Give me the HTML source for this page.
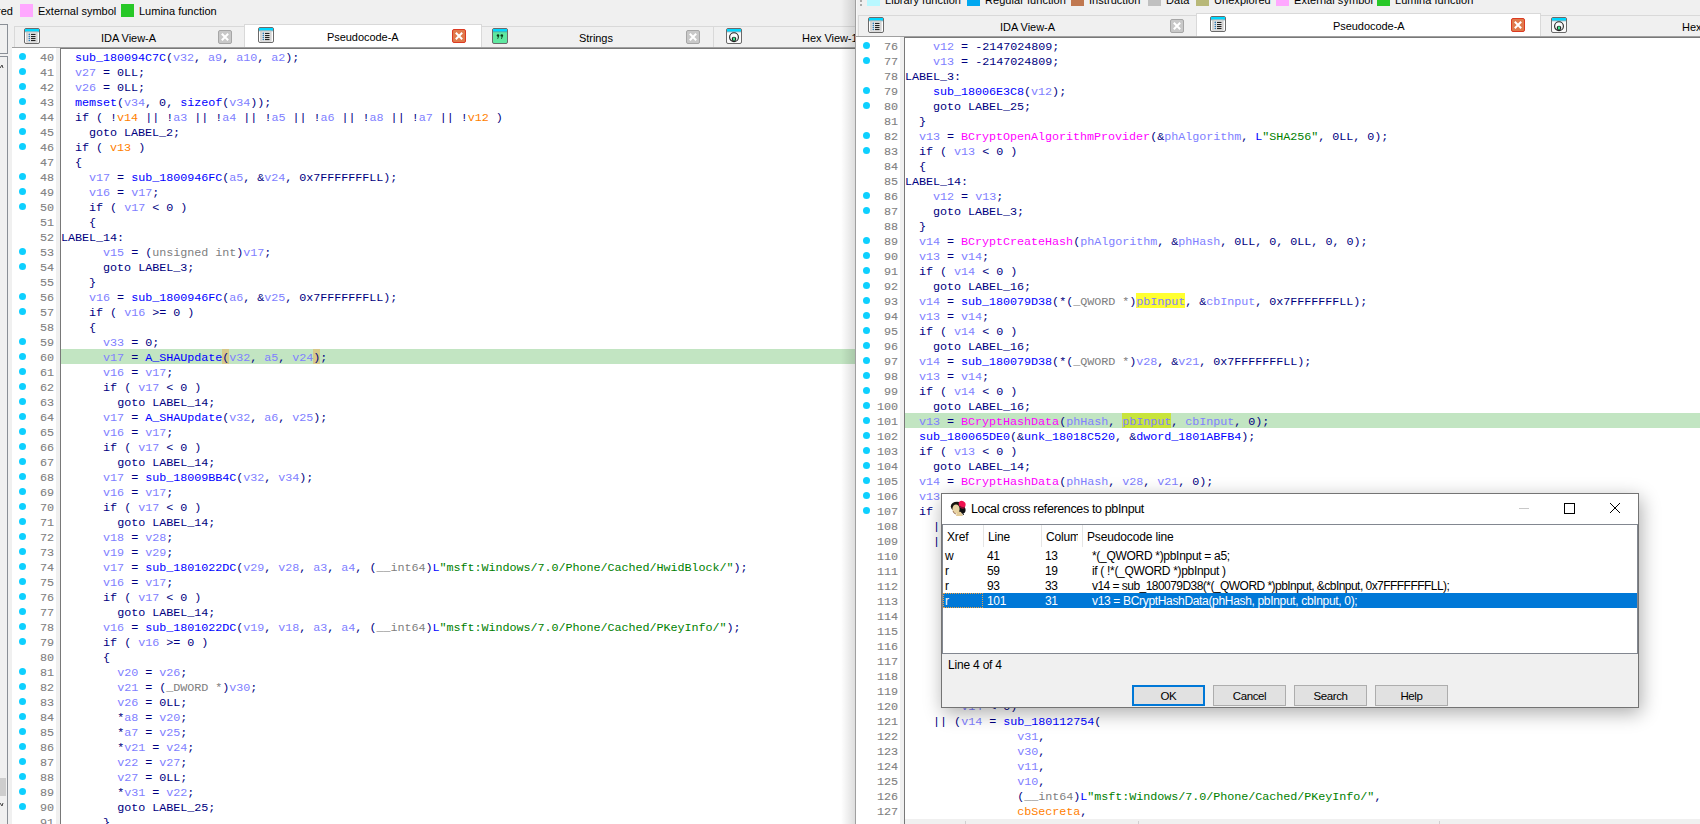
<!DOCTYPE html><html><head><meta charset="utf-8"><style>
*{margin:0;padding:0;box-sizing:border-box}
html,body{width:1700px;height:824px;overflow:hidden}
body{background:#f0f0f0;position:relative;font-family:"Liberation Sans",sans-serif;color:#000}
div{position:absolute}
i{font-style:normal}
.code{font-family:"Liberation Mono",monospace;font-size:11.75px;letter-spacing:-0.05px}
.ln{left:0;right:0;height:15px;line-height:15px;white-space:pre}
.ln i{position:relative;top:2px}
.mk{top:0;height:15px}
.k{color:#000080}.f{color:#0000ff}.v{color:#8080ff}.o{color:#ff8000}.m{color:#ff00ff}.s{color:#008000}.t{color:#808080}
.hl{background:#c2e5c2}
.dot{width:7px;height:7px;border-radius:50%;background:#0ed0ff}
.num{width:30px;text-align:right;height:15px;line-height:15px;color:#808080;-webkit-text-stroke:0.1px}
.num span{position:relative;top:2px}
.ui{font-size:11px;letter-spacing:-0.05px;white-space:pre;line-height:14px}
.dl{font-size:12px;letter-spacing:-0.35px;white-space:pre;line-height:14px}
.sw{width:13px;height:13px}
.cls{width:14px;height:14px;border-radius:2px}
.cls.g{background:#c4c4c4;border:1px solid #a8a8a8}
.cls.r{background:#e07050;border:1px solid #d04030}
.cls::before,.cls::after{content:"";position:absolute;left:2.5px;top:5.5px;width:7px;height:2px;background:#fff}
.cls::before{transform:rotate(45deg)}.cls::after{transform:rotate(-45deg)}
.tab{top:0;height:22px;border-top:1px solid #d9d9d9;border-left:1px solid #d9d9d9}
.btn{top:685px;height:21px;width:73px;background:#e1e1e1;border:1px solid #adadad;text-align:center;font-size:11.5px;letter-spacing:-0.4px;line-height:21px}
</style></head><body>
<div class="ui" style="right:1687px;top:4px;text-align:right;letter-spacing:0">Unexplored</div>
<div class="sw" style="left:20px;top:4px;background:#ffa8ff"></div>
<div class="ui" style="left:38px;top:4px;letter-spacing:0">External symbol</div>
<div class="sw" style="left:121px;top:4px;background:#28c828"></div>
<div class="ui" style="left:139px;top:4px;letter-spacing:0">Lumina function</div>
<div style="left:-2px;top:24px;width:10px;height:30px;border:1px solid #8a8f96"></div>
<div style="left:-2px;top:56px;width:10px;height:800px;border:1px solid #8a8f96"></div>
<div style="left:0;top:778px;width:6px;height:18px;background:#cdcdcd"></div>
<svg width="4" height="5" style="position:absolute;left:0;top:64px" viewBox="0 0 4 5"><path d="M0 4 L2 1 L3 4" stroke="#444" stroke-width="1" fill="none"/></svg>
<svg width="4" height="5" style="position:absolute;left:0;top:802px" viewBox="0 0 4 5"><path d="M0 1 L2 4 L3 1" stroke="#444" stroke-width="1" fill="none"/></svg>
<div style="left:14px;top:26px;width:841px;height:22px;border-top:1px solid #d9d9d9;border-left:1px solid #d9d9d9"></div>
<div style="left:713px;top:27px;width:1px;height:20px;background:#d9d9d9"></div>
<div style="left:244px;top:24px;width:238px;height:24px;background:#fff;border-top:1px solid #d9d9d9;border-left:1px solid #d9d9d9;border-right:1px solid #d9d9d9"></div>
<svg width="16" height="16" viewBox="0 0 16 16" style="position:absolute;left:24px;top:28px"><rect x="0.5" y="0.5" width="15" height="15" rx="1.5" fill="#fff" stroke="#6a6a6a"/><rect x="1" y="1" width="14" height="2.6" fill="#00d8ff"/><rect x="1" y="3.6" width="14" height="0.6" fill="#4a8aa0"/><rect x="2.3" y="3.7" width="11.2" height="10.9" fill="#c4c4c4"/><rect x="3.5" y="4.5" width="9" height="9.5" fill="#e4e4e4"/><g fill="#2a7ab8"><circle cx="5.3" cy="6.4" r="0.8"/><circle cx="5.3" cy="8.5" r="0.8"/><circle cx="5.3" cy="10.5" r="0.8"/><circle cx="5.3" cy="12.5" r="0.8"/></g><g fill="#222"><rect x="7" y="5.9" width="4.5" height="1.1"/><rect x="7" y="8" width="4.5" height="1.1"/><rect x="7" y="10" width="4.5" height="1.1"/><rect x="7" y="12" width="4.5" height="1.1"/></g></svg>
<div class="ui" style="left:101px;top:31px">IDA View-A</div>
<svg width="14" height="14" viewBox="0 0 14 14" style="position:absolute;left:218px;top:30px"><rect x="0.5" y="0.5" width="13" height="13" rx="1.5" fill="#c8c8c8" stroke="#a6a6a6"/><path d="M3.8 3.8L10.2 10.2M10.2 3.8L3.8 10.2" stroke="#fff" stroke-width="2"/></svg>
<svg width="16" height="16" viewBox="0 0 16 16" style="position:absolute;left:258px;top:27px"><rect x="0.5" y="0.5" width="15" height="15" rx="1.5" fill="#fff" stroke="#6a6a6a"/><rect x="1" y="1" width="14" height="2.6" fill="#00d8ff"/><rect x="1" y="3.6" width="14" height="0.6" fill="#4a8aa0"/><rect x="2.3" y="3.7" width="11.2" height="10.9" fill="#c4c4c4"/><rect x="3.5" y="4.5" width="9" height="9.5" fill="#e4e4e4"/><g fill="#2a7ab8"><circle cx="5.3" cy="6.4" r="0.8"/><circle cx="5.3" cy="8.5" r="0.8"/><circle cx="5.3" cy="10.5" r="0.8"/><circle cx="5.3" cy="12.5" r="0.8"/></g><g fill="#222"><rect x="7" y="5.9" width="4.5" height="1.1"/><rect x="7" y="8" width="4.5" height="1.1"/><rect x="7" y="10" width="4.5" height="1.1"/><rect x="7" y="12" width="4.5" height="1.1"/></g></svg>
<div class="ui" style="left:327px;top:30px">Pseudocode-A</div>
<svg width="14" height="14" viewBox="0 0 14 14" style="position:absolute;left:452px;top:29px"><rect x="0.5" y="0.5" width="13" height="13" rx="1.5" fill="#e07a4c" stroke="#dc3a22"/><path d="M3.8 3.8L10.2 10.2M10.2 3.8L3.8 10.2" stroke="#fff" stroke-width="2"/></svg>
<svg width="16" height="16" viewBox="0 0 16 16" style="position:absolute;left:492px;top:28px"><rect x="0.5" y="0.5" width="15" height="15" rx="1.5" fill="#5ee8a0" stroke="#6a6a6a"/><rect x="1" y="1" width="14" height="2.6" fill="#00d8ff"/><rect x="1" y="3.6" width="14" height="0.6" fill="#4a8aa0"/><g fill="#0a3a1a"><circle cx="6" cy="7.5" r="1.3"/><circle cx="9.8" cy="7.5" r="1.3"/><path d="M6.2 8 L7 8.2 L6 11 L5.3 10.8Z"/><path d="M10 8 L10.8 8.2 L9.8 11 L9.1 10.8Z"/></g></svg>
<div class="ui" style="left:579px;top:31px">Strings</div>
<svg width="14" height="14" viewBox="0 0 14 14" style="position:absolute;left:686px;top:30px"><rect x="0.5" y="0.5" width="13" height="13" rx="1.5" fill="#c8c8c8" stroke="#a6a6a6"/><path d="M3.8 3.8L10.2 10.2M10.2 3.8L3.8 10.2" stroke="#fff" stroke-width="2"/></svg>
<svg width="16" height="16" viewBox="0 0 16 16" style="position:absolute;left:726px;top:28px"><rect x="0.5" y="0.5" width="15" height="15" rx="1.5" fill="#fafafa" stroke="#6a6a6a"/><rect x="1" y="1" width="14" height="2.6" fill="#00d8ff"/><rect x="1" y="3.6" width="14" height="0.6" fill="#4a8aa0"/><circle cx="8" cy="9.2" r="4.4" fill="none" stroke="#222" stroke-width="1.1"/><circle cx="8" cy="11" r="2.3" fill="#222"/><ellipse cx="8" cy="11" rx="1.2" ry="1.7" fill="#40e890"/></svg>
<div class="ui" style="left:802px;top:31px">Hex View-1</div>
<div style="left:12px;top:47px;width:843px;height:777px;background:#fff;border-top:1px solid #a0a0a0"></div>
<div style="left:56px;top:48px;width:4px;height:776px;background:#f0f0f0"></div>
<div style="left:60px;top:48px;width:795px;height:776px;border-top:1px solid #787878;border-left:1px solid #787878"></div>
<div class="dot" style="left:19px;top:53px"></div><div class="num code" style="left:24px;top:49px"><span>40</span></div><div class="dot" style="left:19px;top:68px"></div><div class="num code" style="left:24px;top:64px"><span>41</span></div><div class="dot" style="left:19px;top:83px"></div><div class="num code" style="left:24px;top:79px"><span>42</span></div><div class="dot" style="left:19px;top:98px"></div><div class="num code" style="left:24px;top:94px"><span>43</span></div><div class="dot" style="left:19px;top:113px"></div><div class="num code" style="left:24px;top:109px"><span>44</span></div><div class="dot" style="left:19px;top:128px"></div><div class="num code" style="left:24px;top:124px"><span>45</span></div><div class="dot" style="left:19px;top:143px"></div><div class="num code" style="left:24px;top:139px"><span>46</span></div><div class="num code" style="left:24px;top:154px"><span>47</span></div><div class="dot" style="left:19px;top:173px"></div><div class="num code" style="left:24px;top:169px"><span>48</span></div><div class="dot" style="left:19px;top:188px"></div><div class="num code" style="left:24px;top:184px"><span>49</span></div><div class="dot" style="left:19px;top:203px"></div><div class="num code" style="left:24px;top:199px"><span>50</span></div><div class="num code" style="left:24px;top:214px"><span>51</span></div><div class="num code" style="left:24px;top:229px"><span>52</span></div><div class="dot" style="left:19px;top:248px"></div><div class="num code" style="left:24px;top:244px"><span>53</span></div><div class="dot" style="left:19px;top:263px"></div><div class="num code" style="left:24px;top:259px"><span>54</span></div><div class="num code" style="left:24px;top:274px"><span>55</span></div><div class="dot" style="left:19px;top:293px"></div><div class="num code" style="left:24px;top:289px"><span>56</span></div><div class="dot" style="left:19px;top:308px"></div><div class="num code" style="left:24px;top:304px"><span>57</span></div><div class="num code" style="left:24px;top:319px"><span>58</span></div><div class="dot" style="left:19px;top:338px"></div><div class="num code" style="left:24px;top:334px"><span>59</span></div><div class="dot" style="left:19px;top:353px"></div><div class="num code" style="left:24px;top:349px"><span>60</span></div><div class="dot" style="left:19px;top:368px"></div><div class="num code" style="left:24px;top:364px"><span>61</span></div><div class="dot" style="left:19px;top:383px"></div><div class="num code" style="left:24px;top:379px"><span>62</span></div><div class="dot" style="left:19px;top:398px"></div><div class="num code" style="left:24px;top:394px"><span>63</span></div><div class="dot" style="left:19px;top:413px"></div><div class="num code" style="left:24px;top:409px"><span>64</span></div><div class="dot" style="left:19px;top:428px"></div><div class="num code" style="left:24px;top:424px"><span>65</span></div><div class="dot" style="left:19px;top:443px"></div><div class="num code" style="left:24px;top:439px"><span>66</span></div><div class="dot" style="left:19px;top:458px"></div><div class="num code" style="left:24px;top:454px"><span>67</span></div><div class="dot" style="left:19px;top:473px"></div><div class="num code" style="left:24px;top:469px"><span>68</span></div><div class="dot" style="left:19px;top:488px"></div><div class="num code" style="left:24px;top:484px"><span>69</span></div><div class="dot" style="left:19px;top:503px"></div><div class="num code" style="left:24px;top:499px"><span>70</span></div><div class="dot" style="left:19px;top:518px"></div><div class="num code" style="left:24px;top:514px"><span>71</span></div><div class="dot" style="left:19px;top:533px"></div><div class="num code" style="left:24px;top:529px"><span>72</span></div><div class="dot" style="left:19px;top:548px"></div><div class="num code" style="left:24px;top:544px"><span>73</span></div><div class="dot" style="left:19px;top:563px"></div><div class="num code" style="left:24px;top:559px"><span>74</span></div><div class="dot" style="left:19px;top:578px"></div><div class="num code" style="left:24px;top:574px"><span>75</span></div><div class="dot" style="left:19px;top:593px"></div><div class="num code" style="left:24px;top:589px"><span>76</span></div><div class="dot" style="left:19px;top:608px"></div><div class="num code" style="left:24px;top:604px"><span>77</span></div><div class="dot" style="left:19px;top:623px"></div><div class="num code" style="left:24px;top:619px"><span>78</span></div><div class="dot" style="left:19px;top:638px"></div><div class="num code" style="left:24px;top:634px"><span>79</span></div><div class="num code" style="left:24px;top:649px"><span>80</span></div><div class="dot" style="left:19px;top:668px"></div><div class="num code" style="left:24px;top:664px"><span>81</span></div><div class="dot" style="left:19px;top:683px"></div><div class="num code" style="left:24px;top:679px"><span>82</span></div><div class="dot" style="left:19px;top:698px"></div><div class="num code" style="left:24px;top:694px"><span>83</span></div><div class="dot" style="left:19px;top:713px"></div><div class="num code" style="left:24px;top:709px"><span>84</span></div><div class="dot" style="left:19px;top:728px"></div><div class="num code" style="left:24px;top:724px"><span>85</span></div><div class="dot" style="left:19px;top:743px"></div><div class="num code" style="left:24px;top:739px"><span>86</span></div><div class="dot" style="left:19px;top:758px"></div><div class="num code" style="left:24px;top:754px"><span>87</span></div><div class="dot" style="left:19px;top:773px"></div><div class="num code" style="left:24px;top:769px"><span>88</span></div><div class="dot" style="left:19px;top:788px"></div><div class="num code" style="left:24px;top:784px"><span>89</span></div><div class="dot" style="left:19px;top:803px"></div><div class="num code" style="left:24px;top:799px"><span>90</span></div><div class="num code" style="left:24px;top:814px"><span>91</span></div>
<div class="code" style="left:61px;top:49px;width:794px;height:775px;overflow:hidden"><div class="ln" style="top:0px"><i class="k"> </i><i class="k"> </i><i class="f">sub_180094C7C</i><i class="k">(</i><i class="v">v32</i><i class="k">,</i><i class="k"> </i><i class="v">a9</i><i class="k">,</i><i class="k"> </i><i class="v">a10</i><i class="k">,</i><i class="k"> </i><i class="v">a2</i><i class="k">)</i><i class="k">;</i></div><div class="ln" style="top:15px"><i class="k"> </i><i class="k"> </i><i class="v">v27</i><i class="k"> </i><i class="k">=</i><i class="k"> </i><i class="k">0LL</i><i class="k">;</i></div><div class="ln" style="top:30px"><i class="k"> </i><i class="k"> </i><i class="v">v26</i><i class="k"> </i><i class="k">=</i><i class="k"> </i><i class="k">0LL</i><i class="k">;</i></div><div class="ln" style="top:45px"><i class="k"> </i><i class="k"> </i><i class="f">memset</i><i class="k">(</i><i class="v">v34</i><i class="k">,</i><i class="k"> </i><i class="k">0</i><i class="k">,</i><i class="k"> </i><i class="f">sizeof</i><i class="k">(</i><i class="v">v34</i><i class="k">)</i><i class="k">)</i><i class="k">;</i></div><div class="ln" style="top:60px"><i class="k"> </i><i class="k"> </i><i class="k">if</i><i class="k"> </i><i class="k">(</i><i class="k"> </i><i class="k">!</i><i class="o">v14</i><i class="k"> </i><i class="k">|</i><i class="k">|</i><i class="k"> </i><i class="k">!</i><i class="v">a3</i><i class="k"> </i><i class="k">|</i><i class="k">|</i><i class="k"> </i><i class="k">!</i><i class="v">a4</i><i class="k"> </i><i class="k">|</i><i class="k">|</i><i class="k"> </i><i class="k">!</i><i class="v">a5</i><i class="k"> </i><i class="k">|</i><i class="k">|</i><i class="k"> </i><i class="k">!</i><i class="v">a6</i><i class="k"> </i><i class="k">|</i><i class="k">|</i><i class="k"> </i><i class="k">!</i><i class="v">a8</i><i class="k"> </i><i class="k">|</i><i class="k">|</i><i class="k"> </i><i class="k">!</i><i class="v">a7</i><i class="k"> </i><i class="k">|</i><i class="k">|</i><i class="k"> </i><i class="k">!</i><i class="o">v12</i><i class="k"> </i><i class="k">)</i></div><div class="ln" style="top:75px"><i class="k"> </i><i class="k"> </i><i class="k"> </i><i class="k"> </i><i class="k">goto</i><i class="k"> </i><i class="k">LABEL_2</i><i class="k">;</i></div><div class="ln" style="top:90px"><i class="k"> </i><i class="k"> </i><i class="k">if</i><i class="k"> </i><i class="k">(</i><i class="k"> </i><i class="o">v13</i><i class="k"> </i><i class="k">)</i></div><div class="ln" style="top:105px"><i class="k"> </i><i class="k"> </i><i class="k">{</i></div><div class="ln" style="top:120px"><i class="k"> </i><i class="k"> </i><i class="k"> </i><i class="k"> </i><i class="v">v17</i><i class="k"> </i><i class="k">=</i><i class="k"> </i><i class="f">sub_1800946FC</i><i class="k">(</i><i class="v">a5</i><i class="k">,</i><i class="k"> </i><i class="k">&amp;</i><i class="v">v24</i><i class="k">,</i><i class="k"> </i><i class="k">0x7FFFFFFFLL</i><i class="k">)</i><i class="k">;</i></div><div class="ln" style="top:135px"><i class="k"> </i><i class="k"> </i><i class="k"> </i><i class="k"> </i><i class="v">v16</i><i class="k"> </i><i class="k">=</i><i class="k"> </i><i class="v">v17</i><i class="k">;</i></div><div class="ln" style="top:150px"><i class="k"> </i><i class="k"> </i><i class="k"> </i><i class="k"> </i><i class="k">if</i><i class="k"> </i><i class="k">(</i><i class="k"> </i><i class="v">v17</i><i class="k"> </i><i class="k">&lt;</i><i class="k"> </i><i class="k">0</i><i class="k"> </i><i class="k">)</i></div><div class="ln" style="top:165px"><i class="k"> </i><i class="k"> </i><i class="k"> </i><i class="k"> </i><i class="k">{</i></div><div class="ln" style="top:180px"><i class="k">LABEL_14</i><i class="k">:</i></div><div class="ln" style="top:195px"><i class="k"> </i><i class="k"> </i><i class="k"> </i><i class="k"> </i><i class="k"> </i><i class="k"> </i><i class="v">v15</i><i class="k"> </i><i class="k">=</i><i class="k"> </i><i class="k">(</i><i class="t">unsigned int</i><i class="k">)</i><i class="v">v17</i><i class="k">;</i></div><div class="ln" style="top:210px"><i class="k"> </i><i class="k"> </i><i class="k"> </i><i class="k"> </i><i class="k"> </i><i class="k"> </i><i class="k">goto</i><i class="k"> </i><i class="k">LABEL_3</i><i class="k">;</i></div><div class="ln" style="top:225px"><i class="k"> </i><i class="k"> </i><i class="k"> </i><i class="k"> </i><i class="k">}</i></div><div class="ln" style="top:240px"><i class="k"> </i><i class="k"> </i><i class="k"> </i><i class="k"> </i><i class="v">v16</i><i class="k"> </i><i class="k">=</i><i class="k"> </i><i class="f">sub_1800946FC</i><i class="k">(</i><i class="v">a6</i><i class="k">,</i><i class="k"> </i><i class="k">&amp;</i><i class="v">v25</i><i class="k">,</i><i class="k"> </i><i class="k">0x7FFFFFFFLL</i><i class="k">)</i><i class="k">;</i></div><div class="ln" style="top:255px"><i class="k"> </i><i class="k"> </i><i class="k"> </i><i class="k"> </i><i class="k">if</i><i class="k"> </i><i class="k">(</i><i class="k"> </i><i class="v">v16</i><i class="k"> </i><i class="k">&gt;</i><i class="k">=</i><i class="k"> </i><i class="k">0</i><i class="k"> </i><i class="k">)</i></div><div class="ln" style="top:270px"><i class="k"> </i><i class="k"> </i><i class="k"> </i><i class="k"> </i><i class="k">{</i></div><div class="ln" style="top:285px"><i class="k"> </i><i class="k"> </i><i class="k"> </i><i class="k"> </i><i class="k"> </i><i class="k"> </i><i class="v">v33</i><i class="k"> </i><i class="k">=</i><i class="k"> </i><i class="k">0</i><i class="k">;</i></div><div class="ln hl" style="top:300px"><div class="mk" style="left:161px;width:7px;background:#d6c98a"></div><div class="mk" style="left:252px;width:7px;background:#d6c98a"></div><i class="k"> </i><i class="k"> </i><i class="k"> </i><i class="k"> </i><i class="k"> </i><i class="k"> </i><i class="v">v17</i><i class="k"> </i><i class="k">=</i><i class="k"> </i><i class="f">A_SHAUpdate</i><i class="k">(</i><i class="v">v32</i><i class="k">,</i><i class="k"> </i><i class="v">a5</i><i class="k">,</i><i class="k"> </i><i class="v">v24</i><i class="k">)</i><i class="k">;</i></div><div class="ln" style="top:315px"><i class="k"> </i><i class="k"> </i><i class="k"> </i><i class="k"> </i><i class="k"> </i><i class="k"> </i><i class="v">v16</i><i class="k"> </i><i class="k">=</i><i class="k"> </i><i class="v">v17</i><i class="k">;</i></div><div class="ln" style="top:330px"><i class="k"> </i><i class="k"> </i><i class="k"> </i><i class="k"> </i><i class="k"> </i><i class="k"> </i><i class="k">if</i><i class="k"> </i><i class="k">(</i><i class="k"> </i><i class="v">v17</i><i class="k"> </i><i class="k">&lt;</i><i class="k"> </i><i class="k">0</i><i class="k"> </i><i class="k">)</i></div><div class="ln" style="top:345px"><i class="k"> </i><i class="k"> </i><i class="k"> </i><i class="k"> </i><i class="k"> </i><i class="k"> </i><i class="k"> </i><i class="k"> </i><i class="k">goto</i><i class="k"> </i><i class="k">LABEL_14</i><i class="k">;</i></div><div class="ln" style="top:360px"><i class="k"> </i><i class="k"> </i><i class="k"> </i><i class="k"> </i><i class="k"> </i><i class="k"> </i><i class="v">v17</i><i class="k"> </i><i class="k">=</i><i class="k"> </i><i class="f">A_SHAUpdate</i><i class="k">(</i><i class="v">v32</i><i class="k">,</i><i class="k"> </i><i class="v">a6</i><i class="k">,</i><i class="k"> </i><i class="v">v25</i><i class="k">)</i><i class="k">;</i></div><div class="ln" style="top:375px"><i class="k"> </i><i class="k"> </i><i class="k"> </i><i class="k"> </i><i class="k"> </i><i class="k"> </i><i class="v">v16</i><i class="k"> </i><i class="k">=</i><i class="k"> </i><i class="v">v17</i><i class="k">;</i></div><div class="ln" style="top:390px"><i class="k"> </i><i class="k"> </i><i class="k"> </i><i class="k"> </i><i class="k"> </i><i class="k"> </i><i class="k">if</i><i class="k"> </i><i class="k">(</i><i class="k"> </i><i class="v">v17</i><i class="k"> </i><i class="k">&lt;</i><i class="k"> </i><i class="k">0</i><i class="k"> </i><i class="k">)</i></div><div class="ln" style="top:405px"><i class="k"> </i><i class="k"> </i><i class="k"> </i><i class="k"> </i><i class="k"> </i><i class="k"> </i><i class="k"> </i><i class="k"> </i><i class="k">goto</i><i class="k"> </i><i class="k">LABEL_14</i><i class="k">;</i></div><div class="ln" style="top:420px"><i class="k"> </i><i class="k"> </i><i class="k"> </i><i class="k"> </i><i class="k"> </i><i class="k"> </i><i class="v">v17</i><i class="k"> </i><i class="k">=</i><i class="k"> </i><i class="f">sub_18009BB4C</i><i class="k">(</i><i class="v">v32</i><i class="k">,</i><i class="k"> </i><i class="v">v34</i><i class="k">)</i><i class="k">;</i></div><div class="ln" style="top:435px"><i class="k"> </i><i class="k"> </i><i class="k"> </i><i class="k"> </i><i class="k"> </i><i class="k"> </i><i class="v">v16</i><i class="k"> </i><i class="k">=</i><i class="k"> </i><i class="v">v17</i><i class="k">;</i></div><div class="ln" style="top:450px"><i class="k"> </i><i class="k"> </i><i class="k"> </i><i class="k"> </i><i class="k"> </i><i class="k"> </i><i class="k">if</i><i class="k"> </i><i class="k">(</i><i class="k"> </i><i class="v">v17</i><i class="k"> </i><i class="k">&lt;</i><i class="k"> </i><i class="k">0</i><i class="k"> </i><i class="k">)</i></div><div class="ln" style="top:465px"><i class="k"> </i><i class="k"> </i><i class="k"> </i><i class="k"> </i><i class="k"> </i><i class="k"> </i><i class="k"> </i><i class="k"> </i><i class="k">goto</i><i class="k"> </i><i class="k">LABEL_14</i><i class="k">;</i></div><div class="ln" style="top:480px"><i class="k"> </i><i class="k"> </i><i class="k"> </i><i class="k"> </i><i class="k"> </i><i class="k"> </i><i class="v">v18</i><i class="k"> </i><i class="k">=</i><i class="k"> </i><i class="v">v28</i><i class="k">;</i></div><div class="ln" style="top:495px"><i class="k"> </i><i class="k"> </i><i class="k"> </i><i class="k"> </i><i class="k"> </i><i class="k"> </i><i class="v">v19</i><i class="k"> </i><i class="k">=</i><i class="k"> </i><i class="v">v29</i><i class="k">;</i></div><div class="ln" style="top:510px"><i class="k"> </i><i class="k"> </i><i class="k"> </i><i class="k"> </i><i class="k"> </i><i class="k"> </i><i class="v">v17</i><i class="k"> </i><i class="k">=</i><i class="k"> </i><i class="f">sub_1801022DC</i><i class="k">(</i><i class="v">v29</i><i class="k">,</i><i class="k"> </i><i class="v">v28</i><i class="k">,</i><i class="k"> </i><i class="v">a3</i><i class="k">,</i><i class="k"> </i><i class="v">a4</i><i class="k">,</i><i class="k"> </i><i class="k">(</i><i class="t">__int64</i><i class="k">)</i><i class="f">L</i><i class="s">&quot;msft:Windows/7.0/Phone/Cached/HwidBlock/&quot;</i><i class="k">)</i><i class="k">;</i></div><div class="ln" style="top:525px"><i class="k"> </i><i class="k"> </i><i class="k"> </i><i class="k"> </i><i class="k"> </i><i class="k"> </i><i class="v">v16</i><i class="k"> </i><i class="k">=</i><i class="k"> </i><i class="v">v17</i><i class="k">;</i></div><div class="ln" style="top:540px"><i class="k"> </i><i class="k"> </i><i class="k"> </i><i class="k"> </i><i class="k"> </i><i class="k"> </i><i class="k">if</i><i class="k"> </i><i class="k">(</i><i class="k"> </i><i class="v">v17</i><i class="k"> </i><i class="k">&lt;</i><i class="k"> </i><i class="k">0</i><i class="k"> </i><i class="k">)</i></div><div class="ln" style="top:555px"><i class="k"> </i><i class="k"> </i><i class="k"> </i><i class="k"> </i><i class="k"> </i><i class="k"> </i><i class="k"> </i><i class="k"> </i><i class="k">goto</i><i class="k"> </i><i class="k">LABEL_14</i><i class="k">;</i></div><div class="ln" style="top:570px"><i class="k"> </i><i class="k"> </i><i class="k"> </i><i class="k"> </i><i class="k"> </i><i class="k"> </i><i class="v">v16</i><i class="k"> </i><i class="k">=</i><i class="k"> </i><i class="f">sub_1801022DC</i><i class="k">(</i><i class="v">v19</i><i class="k">,</i><i class="k"> </i><i class="v">v18</i><i class="k">,</i><i class="k"> </i><i class="v">a3</i><i class="k">,</i><i class="k"> </i><i class="v">a4</i><i class="k">,</i><i class="k"> </i><i class="k">(</i><i class="t">__int64</i><i class="k">)</i><i class="f">L</i><i class="s">&quot;msft:Windows/7.0/Phone/Cached/PKeyInfo/&quot;</i><i class="k">)</i><i class="k">;</i></div><div class="ln" style="top:585px"><i class="k"> </i><i class="k"> </i><i class="k"> </i><i class="k"> </i><i class="k"> </i><i class="k"> </i><i class="k">if</i><i class="k"> </i><i class="k">(</i><i class="k"> </i><i class="v">v16</i><i class="k"> </i><i class="k">&gt;</i><i class="k">=</i><i class="k"> </i><i class="k">0</i><i class="k"> </i><i class="k">)</i></div><div class="ln" style="top:600px"><i class="k"> </i><i class="k"> </i><i class="k"> </i><i class="k"> </i><i class="k"> </i><i class="k"> </i><i class="k">{</i></div><div class="ln" style="top:615px"><i class="k"> </i><i class="k"> </i><i class="k"> </i><i class="k"> </i><i class="k"> </i><i class="k"> </i><i class="k"> </i><i class="k"> </i><i class="v">v20</i><i class="k"> </i><i class="k">=</i><i class="k"> </i><i class="v">v26</i><i class="k">;</i></div><div class="ln" style="top:630px"><i class="k"> </i><i class="k"> </i><i class="k"> </i><i class="k"> </i><i class="k"> </i><i class="k"> </i><i class="k"> </i><i class="k"> </i><i class="v">v21</i><i class="k"> </i><i class="k">=</i><i class="k"> </i><i class="k">(</i><i class="t">_DWORD *</i><i class="k">)</i><i class="v">v30</i><i class="k">;</i></div><div class="ln" style="top:645px"><i class="k"> </i><i class="k"> </i><i class="k"> </i><i class="k"> </i><i class="k"> </i><i class="k"> </i><i class="k"> </i><i class="k"> </i><i class="v">v26</i><i class="k"> </i><i class="k">=</i><i class="k"> </i><i class="k">0LL</i><i class="k">;</i></div><div class="ln" style="top:660px"><i class="k"> </i><i class="k"> </i><i class="k"> </i><i class="k"> </i><i class="k"> </i><i class="k"> </i><i class="k"> </i><i class="k"> </i><i class="k">*</i><i class="v">a8</i><i class="k"> </i><i class="k">=</i><i class="k"> </i><i class="v">v20</i><i class="k">;</i></div><div class="ln" style="top:675px"><i class="k"> </i><i class="k"> </i><i class="k"> </i><i class="k"> </i><i class="k"> </i><i class="k"> </i><i class="k"> </i><i class="k"> </i><i class="k">*</i><i class="v">a7</i><i class="k"> </i><i class="k">=</i><i class="k"> </i><i class="v">v25</i><i class="k">;</i></div><div class="ln" style="top:690px"><i class="k"> </i><i class="k"> </i><i class="k"> </i><i class="k"> </i><i class="k"> </i><i class="k"> </i><i class="k"> </i><i class="k"> </i><i class="k">*</i><i class="v">v21</i><i class="k"> </i><i class="k">=</i><i class="k"> </i><i class="v">v24</i><i class="k">;</i></div><div class="ln" style="top:705px"><i class="k"> </i><i class="k"> </i><i class="k"> </i><i class="k"> </i><i class="k"> </i><i class="k"> </i><i class="k"> </i><i class="k"> </i><i class="v">v22</i><i class="k"> </i><i class="k">=</i><i class="k"> </i><i class="v">v27</i><i class="k">;</i></div><div class="ln" style="top:720px"><i class="k"> </i><i class="k"> </i><i class="k"> </i><i class="k"> </i><i class="k"> </i><i class="k"> </i><i class="k"> </i><i class="k"> </i><i class="v">v27</i><i class="k"> </i><i class="k">=</i><i class="k"> </i><i class="k">0LL</i><i class="k">;</i></div><div class="ln" style="top:735px"><i class="k"> </i><i class="k"> </i><i class="k"> </i><i class="k"> </i><i class="k"> </i><i class="k"> </i><i class="k"> </i><i class="k"> </i><i class="k">*</i><i class="v">v31</i><i class="k"> </i><i class="k">=</i><i class="k"> </i><i class="v">v22</i><i class="k">;</i></div><div class="ln" style="top:750px"><i class="k"> </i><i class="k"> </i><i class="k"> </i><i class="k"> </i><i class="k"> </i><i class="k"> </i><i class="k"> </i><i class="k"> </i><i class="k">goto</i><i class="k"> </i><i class="k">LABEL_25</i><i class="k">;</i></div><div class="ln" style="top:765px"><i class="k"> </i><i class="k"> </i><i class="k"> </i><i class="k"> </i><i class="k"> </i><i class="k"> </i><i class="k">}</i></div></div>
<div style="left:841px;top:0;width:14px;height:824px;background:linear-gradient(to right,rgba(0,0,0,0),rgba(0,0,0,0.13))"></div>
<div style="left:855px;top:0;width:845px;height:824px;background:#f0f0f0;border-left:1px solid #a0a0a0"></div>
<div style="left:856px;top:0;width:1px;height:36px;background:#f8f8f8"></div>
<div style="left:860px;top:0;width:2px;height:2px;background:#aaa"></div><div style="left:860px;top:4px;width:2px;height:2px;background:#aaa"></div>
<div class="sw" style="left:867px;top:-7px;background:#b8f8ff"></div>
<div class="ui" style="left:885px;top:-7px;letter-spacing:0.05px">Library function</div>
<div class="sw" style="left:967px;top:-7px;background:#00a8f0"></div>
<div class="ui" style="left:985px;top:-7px;letter-spacing:0.05px">Regular function</div>
<div class="sw" style="left:1071px;top:-7px;background:#c07850"></div>
<div class="ui" style="left:1089px;top:-7px;letter-spacing:0.05px">Instruction</div>
<div class="sw" style="left:1148px;top:-7px;background:#c0c0c0"></div>
<div class="ui" style="left:1166px;top:-7px;letter-spacing:0.05px">Data</div>
<div class="sw" style="left:1196px;top:-7px;background:#b8b878"></div>
<div class="ui" style="left:1214px;top:-7px;letter-spacing:0.05px">Unexplored</div>
<div class="sw" style="left:1276px;top:-7px;background:#ffa8ff"></div>
<div class="ui" style="left:1294px;top:-7px;letter-spacing:0.05px">External symbol</div>
<div class="sw" style="left:1377px;top:-7px;background:#28c828"></div>
<div class="ui" style="left:1395px;top:-7px;letter-spacing:0.05px">Lumina function</div>
<div style="left:858px;top:15px;width:842px;height:22px;border-top:1px solid #d9d9d9;border-left:1px solid #d9d9d9"></div>
<div style="left:1196px;top:13px;width:345px;height:24px;background:#fff;border-top:1px solid #d9d9d9;border-left:1px solid #d9d9d9;border-right:1px solid #d9d9d9"></div>
<svg width="16" height="16" viewBox="0 0 16 16" style="position:absolute;left:868px;top:17px"><rect x="0.5" y="0.5" width="15" height="15" rx="1.5" fill="#fff" stroke="#6a6a6a"/><rect x="1" y="1" width="14" height="2.6" fill="#00d8ff"/><rect x="1" y="3.6" width="14" height="0.6" fill="#4a8aa0"/><rect x="2.3" y="3.7" width="11.2" height="10.9" fill="#c4c4c4"/><rect x="3.5" y="4.5" width="9" height="9.5" fill="#e4e4e4"/><g fill="#2a7ab8"><circle cx="5.3" cy="6.4" r="0.8"/><circle cx="5.3" cy="8.5" r="0.8"/><circle cx="5.3" cy="10.5" r="0.8"/><circle cx="5.3" cy="12.5" r="0.8"/></g><g fill="#222"><rect x="7" y="5.9" width="4.5" height="1.1"/><rect x="7" y="8" width="4.5" height="1.1"/><rect x="7" y="10" width="4.5" height="1.1"/><rect x="7" y="12" width="4.5" height="1.1"/></g></svg>
<div class="ui" style="left:1000px;top:20px">IDA View-A</div>
<svg width="14" height="14" viewBox="0 0 14 14" style="position:absolute;left:1170px;top:19px"><rect x="0.5" y="0.5" width="13" height="13" rx="1.5" fill="#c8c8c8" stroke="#a6a6a6"/><path d="M3.8 3.8L10.2 10.2M10.2 3.8L3.8 10.2" stroke="#fff" stroke-width="2"/></svg>
<svg width="16" height="16" viewBox="0 0 16 16" style="position:absolute;left:1210px;top:16px"><rect x="0.5" y="0.5" width="15" height="15" rx="1.5" fill="#fff" stroke="#6a6a6a"/><rect x="1" y="1" width="14" height="2.6" fill="#00d8ff"/><rect x="1" y="3.6" width="14" height="0.6" fill="#4a8aa0"/><rect x="2.3" y="3.7" width="11.2" height="10.9" fill="#c4c4c4"/><rect x="3.5" y="4.5" width="9" height="9.5" fill="#e4e4e4"/><g fill="#2a7ab8"><circle cx="5.3" cy="6.4" r="0.8"/><circle cx="5.3" cy="8.5" r="0.8"/><circle cx="5.3" cy="10.5" r="0.8"/><circle cx="5.3" cy="12.5" r="0.8"/></g><g fill="#222"><rect x="7" y="5.9" width="4.5" height="1.1"/><rect x="7" y="8" width="4.5" height="1.1"/><rect x="7" y="10" width="4.5" height="1.1"/><rect x="7" y="12" width="4.5" height="1.1"/></g></svg>
<div class="ui" style="left:1333px;top:19px">Pseudocode-A</div>
<svg width="14" height="14" viewBox="0 0 14 14" style="position:absolute;left:1511px;top:18px"><rect x="0.5" y="0.5" width="13" height="13" rx="1.5" fill="#e07a4c" stroke="#dc3a22"/><path d="M3.8 3.8L10.2 10.2M10.2 3.8L3.8 10.2" stroke="#fff" stroke-width="2"/></svg>
<svg width="16" height="16" viewBox="0 0 16 16" style="position:absolute;left:1551px;top:17px"><rect x="0.5" y="0.5" width="15" height="15" rx="1.5" fill="#fafafa" stroke="#6a6a6a"/><rect x="1" y="1" width="14" height="2.6" fill="#00d8ff"/><rect x="1" y="3.6" width="14" height="0.6" fill="#4a8aa0"/><circle cx="8" cy="9.2" r="4.4" fill="none" stroke="#222" stroke-width="1.1"/><circle cx="8" cy="11" r="2.3" fill="#222"/><ellipse cx="8" cy="11" rx="1.2" ry="1.7" fill="#40e890"/></svg>
<div class="ui" style="left:1682px;top:20px">Hex View-1</div>
<div style="left:856px;top:36px;width:844px;height:788px;background:#fff;border-top:1px solid #a0a0a0"></div>
<div style="left:900px;top:37px;width:4px;height:787px;background:#f0f0f0"></div>
<div style="left:904px;top:37px;width:796px;height:787px;border-top:1px solid #787878;border-left:1px solid #787878"></div>
<div class="dot" style="left:863px;top:42px"></div><div class="num code" style="left:868px;top:38px"><span>76</span></div><div class="dot" style="left:863px;top:57px"></div><div class="num code" style="left:868px;top:53px"><span>77</span></div><div class="num code" style="left:868px;top:68px"><span>78</span></div><div class="dot" style="left:863px;top:87px"></div><div class="num code" style="left:868px;top:83px"><span>79</span></div><div class="dot" style="left:863px;top:102px"></div><div class="num code" style="left:868px;top:98px"><span>80</span></div><div class="num code" style="left:868px;top:113px"><span>81</span></div><div class="dot" style="left:863px;top:132px"></div><div class="num code" style="left:868px;top:128px"><span>82</span></div><div class="dot" style="left:863px;top:147px"></div><div class="num code" style="left:868px;top:143px"><span>83</span></div><div class="num code" style="left:868px;top:158px"><span>84</span></div><div class="num code" style="left:868px;top:173px"><span>85</span></div><div class="dot" style="left:863px;top:192px"></div><div class="num code" style="left:868px;top:188px"><span>86</span></div><div class="dot" style="left:863px;top:207px"></div><div class="num code" style="left:868px;top:203px"><span>87</span></div><div class="num code" style="left:868px;top:218px"><span>88</span></div><div class="dot" style="left:863px;top:237px"></div><div class="num code" style="left:868px;top:233px"><span>89</span></div><div class="dot" style="left:863px;top:252px"></div><div class="num code" style="left:868px;top:248px"><span>90</span></div><div class="dot" style="left:863px;top:267px"></div><div class="num code" style="left:868px;top:263px"><span>91</span></div><div class="dot" style="left:863px;top:282px"></div><div class="num code" style="left:868px;top:278px"><span>92</span></div><div class="dot" style="left:863px;top:297px"></div><div class="num code" style="left:868px;top:293px"><span>93</span></div><div class="dot" style="left:863px;top:312px"></div><div class="num code" style="left:868px;top:308px"><span>94</span></div><div class="dot" style="left:863px;top:327px"></div><div class="num code" style="left:868px;top:323px"><span>95</span></div><div class="dot" style="left:863px;top:342px"></div><div class="num code" style="left:868px;top:338px"><span>96</span></div><div class="dot" style="left:863px;top:357px"></div><div class="num code" style="left:868px;top:353px"><span>97</span></div><div class="dot" style="left:863px;top:372px"></div><div class="num code" style="left:868px;top:368px"><span>98</span></div><div class="dot" style="left:863px;top:387px"></div><div class="num code" style="left:868px;top:383px"><span>99</span></div><div class="dot" style="left:863px;top:402px"></div><div class="num code" style="left:868px;top:398px"><span>100</span></div><div class="dot" style="left:863px;top:417px"></div><div class="num code" style="left:868px;top:413px"><span>101</span></div><div class="dot" style="left:863px;top:432px"></div><div class="num code" style="left:868px;top:428px"><span>102</span></div><div class="dot" style="left:863px;top:447px"></div><div class="num code" style="left:868px;top:443px"><span>103</span></div><div class="dot" style="left:863px;top:462px"></div><div class="num code" style="left:868px;top:458px"><span>104</span></div><div class="dot" style="left:863px;top:477px"></div><div class="num code" style="left:868px;top:473px"><span>105</span></div><div class="dot" style="left:863px;top:492px"></div><div class="num code" style="left:868px;top:488px"><span>106</span></div><div class="dot" style="left:863px;top:507px"></div><div class="num code" style="left:868px;top:503px"><span>107</span></div><div class="num code" style="left:868px;top:518px"><span>108</span></div><div class="num code" style="left:868px;top:533px"><span>109</span></div><div class="num code" style="left:868px;top:548px"><span>110</span></div><div class="num code" style="left:868px;top:563px"><span>111</span></div><div class="num code" style="left:868px;top:578px"><span>112</span></div><div class="num code" style="left:868px;top:593px"><span>113</span></div><div class="num code" style="left:868px;top:608px"><span>114</span></div><div class="num code" style="left:868px;top:623px"><span>115</span></div><div class="num code" style="left:868px;top:638px"><span>116</span></div><div class="num code" style="left:868px;top:653px"><span>117</span></div><div class="num code" style="left:868px;top:668px"><span>118</span></div><div class="num code" style="left:868px;top:683px"><span>119</span></div><div class="num code" style="left:868px;top:698px"><span>120</span></div><div class="num code" style="left:868px;top:713px"><span>121</span></div><div class="num code" style="left:868px;top:728px"><span>122</span></div><div class="num code" style="left:868px;top:743px"><span>123</span></div><div class="num code" style="left:868px;top:758px"><span>124</span></div><div class="num code" style="left:868px;top:773px"><span>125</span></div><div class="num code" style="left:868px;top:788px"><span>126</span></div><div class="num code" style="left:868px;top:803px"><span>127</span></div>
<div class="code" style="left:905px;top:38px;width:795px;height:781px;overflow:hidden"><div class="ln" style="top:0px"><i class="k"> </i><i class="k"> </i><i class="k"> </i><i class="k"> </i><i class="v">v12</i><i class="k"> </i><i class="k">=</i><i class="k"> </i><i class="k">-2147024809</i><i class="k">;</i></div><div class="ln" style="top:15px"><i class="k"> </i><i class="k"> </i><i class="k"> </i><i class="k"> </i><i class="v">v13</i><i class="k"> </i><i class="k">=</i><i class="k"> </i><i class="k">-2147024809</i><i class="k">;</i></div><div class="ln" style="top:30px"><i class="k">LABEL_3</i><i class="k">:</i></div><div class="ln" style="top:45px"><i class="k"> </i><i class="k"> </i><i class="k"> </i><i class="k"> </i><i class="f">sub_18006E3C8</i><i class="k">(</i><i class="v">v12</i><i class="k">)</i><i class="k">;</i></div><div class="ln" style="top:60px"><i class="k"> </i><i class="k"> </i><i class="k"> </i><i class="k"> </i><i class="k">goto</i><i class="k"> </i><i class="k">LABEL_25</i><i class="k">;</i></div><div class="ln" style="top:75px"><i class="k"> </i><i class="k"> </i><i class="k">}</i></div><div class="ln" style="top:90px"><i class="k"> </i><i class="k"> </i><i class="v">v13</i><i class="k"> </i><i class="k">=</i><i class="k"> </i><i class="m">BCryptOpenAlgorithmProvider</i><i class="k">(</i><i class="k">&amp;</i><i class="v">phAlgorithm</i><i class="k">,</i><i class="k"> </i><i class="f">L</i><i class="s">&quot;SHA256&quot;</i><i class="k">,</i><i class="k"> </i><i class="k">0LL</i><i class="k">,</i><i class="k"> </i><i class="k">0</i><i class="k">)</i><i class="k">;</i></div><div class="ln" style="top:105px"><i class="k"> </i><i class="k"> </i><i class="k">if</i><i class="k"> </i><i class="k">(</i><i class="k"> </i><i class="v">v13</i><i class="k"> </i><i class="k">&lt;</i><i class="k"> </i><i class="k">0</i><i class="k"> </i><i class="k">)</i></div><div class="ln" style="top:120px"><i class="k"> </i><i class="k"> </i><i class="k">{</i></div><div class="ln" style="top:135px"><i class="k">LABEL_14</i><i class="k">:</i></div><div class="ln" style="top:150px"><i class="k"> </i><i class="k"> </i><i class="k"> </i><i class="k"> </i><i class="v">v12</i><i class="k"> </i><i class="k">=</i><i class="k"> </i><i class="v">v13</i><i class="k">;</i></div><div class="ln" style="top:165px"><i class="k"> </i><i class="k"> </i><i class="k"> </i><i class="k"> </i><i class="k">goto</i><i class="k"> </i><i class="k">LABEL_3</i><i class="k">;</i></div><div class="ln" style="top:180px"><i class="k"> </i><i class="k"> </i><i class="k">}</i></div><div class="ln" style="top:195px"><i class="k"> </i><i class="k"> </i><i class="v">v14</i><i class="k"> </i><i class="k">=</i><i class="k"> </i><i class="m">BCryptCreateHash</i><i class="k">(</i><i class="v">phAlgorithm</i><i class="k">,</i><i class="k"> </i><i class="k">&amp;</i><i class="v">phHash</i><i class="k">,</i><i class="k"> </i><i class="k">0LL</i><i class="k">,</i><i class="k"> </i><i class="k">0</i><i class="k">,</i><i class="k"> </i><i class="k">0LL</i><i class="k">,</i><i class="k"> </i><i class="k">0</i><i class="k">,</i><i class="k"> </i><i class="k">0</i><i class="k">)</i><i class="k">;</i></div><div class="ln" style="top:210px"><i class="k"> </i><i class="k"> </i><i class="v">v13</i><i class="k"> </i><i class="k">=</i><i class="k"> </i><i class="v">v14</i><i class="k">;</i></div><div class="ln" style="top:225px"><i class="k"> </i><i class="k"> </i><i class="k">if</i><i class="k"> </i><i class="k">(</i><i class="k"> </i><i class="v">v14</i><i class="k"> </i><i class="k">&lt;</i><i class="k"> </i><i class="k">0</i><i class="k"> </i><i class="k">)</i></div><div class="ln" style="top:240px"><i class="k"> </i><i class="k"> </i><i class="k"> </i><i class="k"> </i><i class="k">goto</i><i class="k"> </i><i class="k">LABEL_16</i><i class="k">;</i></div><div class="ln" style="top:255px"><div class="mk" style="left:231px;width:49px;background:#ffff30"></div><i class="k"> </i><i class="k"> </i><i class="v">v14</i><i class="k"> </i><i class="k">=</i><i class="k"> </i><i class="f">sub_180079D38</i><i class="k">(</i><i class="k">*</i><i class="k">(</i><i class="t">_QWORD *</i><i class="k">)</i><i class="v">pbInput</i><i class="k">,</i><i class="k"> </i><i class="k">&amp;</i><i class="v">cbInput</i><i class="k">,</i><i class="k"> </i><i class="k">0x7FFFFFFFLL</i><i class="k">)</i><i class="k">;</i></div><div class="ln" style="top:270px"><i class="k"> </i><i class="k"> </i><i class="v">v13</i><i class="k"> </i><i class="k">=</i><i class="k"> </i><i class="v">v14</i><i class="k">;</i></div><div class="ln" style="top:285px"><i class="k"> </i><i class="k"> </i><i class="k">if</i><i class="k"> </i><i class="k">(</i><i class="k"> </i><i class="v">v14</i><i class="k"> </i><i class="k">&lt;</i><i class="k"> </i><i class="k">0</i><i class="k"> </i><i class="k">)</i></div><div class="ln" style="top:300px"><i class="k"> </i><i class="k"> </i><i class="k"> </i><i class="k"> </i><i class="k">goto</i><i class="k"> </i><i class="k">LABEL_16</i><i class="k">;</i></div><div class="ln" style="top:315px"><i class="k"> </i><i class="k"> </i><i class="v">v14</i><i class="k"> </i><i class="k">=</i><i class="k"> </i><i class="f">sub_180079D38</i><i class="k">(</i><i class="k">*</i><i class="k">(</i><i class="t">_QWORD *</i><i class="k">)</i><i class="v">v28</i><i class="k">,</i><i class="k"> </i><i class="k">&amp;</i><i class="v">v21</i><i class="k">,</i><i class="k"> </i><i class="k">0x7FFFFFFFLL</i><i class="k">)</i><i class="k">;</i></div><div class="ln" style="top:330px"><i class="k"> </i><i class="k"> </i><i class="v">v13</i><i class="k"> </i><i class="k">=</i><i class="k"> </i><i class="v">v14</i><i class="k">;</i></div><div class="ln" style="top:345px"><i class="k"> </i><i class="k"> </i><i class="k">if</i><i class="k"> </i><i class="k">(</i><i class="k"> </i><i class="v">v14</i><i class="k"> </i><i class="k">&lt;</i><i class="k"> </i><i class="k">0</i><i class="k"> </i><i class="k">)</i></div><div class="ln" style="top:360px"><i class="k"> </i><i class="k"> </i><i class="k"> </i><i class="k"> </i><i class="k">goto</i><i class="k"> </i><i class="k">LABEL_16</i><i class="k">;</i></div><div class="ln hl" style="top:375px"><div class="mk" style="left:217px;width:49px;background:#c8e43c"></div><i class="k"> </i><i class="k"> </i><i class="v">v13</i><i class="k"> </i><i class="k">=</i><i class="k"> </i><i class="m">BCryptHashData</i><i class="k">(</i><i class="v">phHash</i><i class="k">,</i><i class="k"> </i><i class="v">pbInput</i><i class="k">,</i><i class="k"> </i><i class="v">cbInput</i><i class="k">,</i><i class="k"> </i><i class="k">0</i><i class="k">)</i><i class="k">;</i></div><div class="ln" style="top:390px"><i class="k"> </i><i class="k"> </i><i class="f">sub_180065DE0</i><i class="k">(</i><i class="k">&amp;</i><i class="f">unk_18018C520</i><i class="k">,</i><i class="k"> </i><i class="k">&amp;</i><i class="f">dword_1801ABFB4</i><i class="k">)</i><i class="k">;</i></div><div class="ln" style="top:405px"><i class="k"> </i><i class="k"> </i><i class="k">if</i><i class="k"> </i><i class="k">(</i><i class="k"> </i><i class="v">v13</i><i class="k"> </i><i class="k">&lt;</i><i class="k"> </i><i class="k">0</i><i class="k"> </i><i class="k">)</i></div><div class="ln" style="top:420px"><i class="k"> </i><i class="k"> </i><i class="k"> </i><i class="k"> </i><i class="k">goto</i><i class="k"> </i><i class="k">LABEL_14</i><i class="k">;</i></div><div class="ln" style="top:435px"><i class="k"> </i><i class="k"> </i><i class="v">v14</i><i class="k"> </i><i class="k">=</i><i class="k"> </i><i class="m">BCryptHashData</i><i class="k">(</i><i class="v">phHash</i><i class="k">,</i><i class="k"> </i><i class="v">v28</i><i class="k">,</i><i class="k"> </i><i class="v">v21</i><i class="k">,</i><i class="k"> </i><i class="k">0</i><i class="k">)</i><i class="k">;</i></div><div class="ln" style="top:450px"><i class="k"> </i><i class="k"> </i><i class="v">v13</i><i class="k"> </i><i class="k">=</i><i class="k"> </i><i class="v">v14</i><i class="k">;</i></div><div class="ln" style="top:465px"><i class="k"> </i><i class="k"> </i><i class="k">if</i><i class="k"> </i><i class="k">(</i><i class="k"> </i><i class="v">v14</i><i class="k"> </i><i class="k">&lt;</i><i class="k"> </i><i class="k">0</i></div><div class="ln" style="top:480px"><i class="k"> </i><i class="k"> </i><i class="k"> </i><i class="k"> </i><i class="k">|</i><i class="k">|</i></div><div class="ln" style="top:495px"><i class="k"> </i><i class="k"> </i><i class="k"> </i><i class="k"> </i><i class="k">|</i><i class="k">|</i></div><div class="ln" style="top:510px"></div><div class="ln" style="top:525px"></div><div class="ln" style="top:540px"></div><div class="ln" style="top:555px"></div><div class="ln" style="top:570px"></div><div class="ln" style="top:585px"></div><div class="ln" style="top:600px"></div><div class="ln" style="top:615px"></div><div class="ln" style="top:630px"></div><div class="ln" style="top:645px"></div><div class="ln" style="top:660px"><i class="k"> </i><i class="k"> </i><i class="k"> </i><i class="k"> </i><i class="k"> </i><i class="k"> </i><i class="k"> </i><i class="k"> </i><i class="v">v14</i><i class="k"> </i><i class="k">&lt;</i><i class="k"> </i><i class="k">0</i><i class="k">)</i></div><div class="ln" style="top:675px"><i class="k"> </i><i class="k"> </i><i class="k"> </i><i class="k"> </i><i class="k">|</i><i class="k">|</i><i class="k"> </i><i class="k">(</i><i class="v">v14</i><i class="k"> </i><i class="k">=</i><i class="k"> </i><i class="f">sub_180112754</i><i class="k">(</i></div><div class="ln" style="top:690px"><i class="k"> </i><i class="k"> </i><i class="k"> </i><i class="k"> </i><i class="k"> </i><i class="k"> </i><i class="k"> </i><i class="k"> </i><i class="k"> </i><i class="k"> </i><i class="k"> </i><i class="k"> </i><i class="k"> </i><i class="k"> </i><i class="k"> </i><i class="k"> </i><i class="v">v31</i><i class="k">,</i></div><div class="ln" style="top:705px"><i class="k"> </i><i class="k"> </i><i class="k"> </i><i class="k"> </i><i class="k"> </i><i class="k"> </i><i class="k"> </i><i class="k"> </i><i class="k"> </i><i class="k"> </i><i class="k"> </i><i class="k"> </i><i class="k"> </i><i class="k"> </i><i class="k"> </i><i class="k"> </i><i class="v">v30</i><i class="k">,</i></div><div class="ln" style="top:720px"><i class="k"> </i><i class="k"> </i><i class="k"> </i><i class="k"> </i><i class="k"> </i><i class="k"> </i><i class="k"> </i><i class="k"> </i><i class="k"> </i><i class="k"> </i><i class="k"> </i><i class="k"> </i><i class="k"> </i><i class="k"> </i><i class="k"> </i><i class="k"> </i><i class="v">v11</i><i class="k">,</i></div><div class="ln" style="top:735px"><i class="k"> </i><i class="k"> </i><i class="k"> </i><i class="k"> </i><i class="k"> </i><i class="k"> </i><i class="k"> </i><i class="k"> </i><i class="k"> </i><i class="k"> </i><i class="k"> </i><i class="k"> </i><i class="k"> </i><i class="k"> </i><i class="k"> </i><i class="k"> </i><i class="v">v10</i><i class="k">,</i></div><div class="ln" style="top:750px"><i class="k"> </i><i class="k"> </i><i class="k"> </i><i class="k"> </i><i class="k"> </i><i class="k"> </i><i class="k"> </i><i class="k"> </i><i class="k"> </i><i class="k"> </i><i class="k"> </i><i class="k"> </i><i class="k"> </i><i class="k"> </i><i class="k"> </i><i class="k"> </i><i class="k">(</i><i class="t">__int64</i><i class="k">)</i><i class="f">L</i><i class="s">&quot;msft:Windows/7.0/Phone/Cached/PKeyInfo/&quot;</i><i class="k">,</i></div><div class="ln" style="top:765px"><i class="k"> </i><i class="k"> </i><i class="k"> </i><i class="k"> </i><i class="k"> </i><i class="k"> </i><i class="k"> </i><i class="k"> </i><i class="k"> </i><i class="k"> </i><i class="k"> </i><i class="k"> </i><i class="k"> </i><i class="k"> </i><i class="k"> </i><i class="k"> </i><i class="o">cbSecreta</i><i class="k">,</i></div></div>
<div style="left:905px;top:819px;width:795px;height:5px;background:#f0f0f0"></div>
<div style="left:965px;top:821px;width:1px;height:3px;background:#d0d0d0"></div>
<div style="left:1138px;top:821px;width:1px;height:3px;background:#d0d0d0"></div>
<div style="left:1439px;top:821px;width:1px;height:3px;background:#d0d0d0"></div>
<div style="left:941px;top:493px;width:698px;height:215px;background:#f0f0f0;border:1px solid #747474;box-shadow:2px 5px 18px rgba(0,0,0,0.33)"></div>
<div style="left:942px;top:494px;width:696px;height:30px;background:#fff"></div>
<svg width="16" height="16" style="position:absolute;left:950px;top:500px" viewBox="0 0 16 16"><ellipse cx="7" cy="6.5" rx="6.2" ry="4.8" fill="#16140f"/><ellipse cx="12" cy="10" rx="3.6" ry="3.6" fill="#111013"/><path d="M9 2 Q12 -0.5 15 2.5 Q16.5 5 14.5 7.5 Q12 9 10 7 Q8 4.5 9 2Z" fill="#f01050"/><path d="M10 5.5 Q12.5 8 15 6.5 L14.5 8.5 Q12 9.5 10 7.5Z" fill="#801030"/><ellipse cx="6" cy="9" rx="3.6" ry="4.6" fill="#e8d4a4"/><path d="M7 12 Q9 11 11 12 L13 16 L6 16Z" fill="#e4cc98"/><path d="M3 11 Q4 14 6 14" stroke="#8a5a40" stroke-width="0.8" fill="none"/><path d="M11 10 L13 15 L14 15 L12 9Z" fill="#111"/></svg>
<div class="dl" style="left:971px;top:502px;font-size:12.5px;letter-spacing:-0.36px">Local cross references to pbInput</div>
<div style="left:1519px;top:508px;width:10px;height:1px;background:#c8c8c8"></div>
<div style="left:1564px;top:503px;width:11px;height:11px;border:1px solid #000"></div>
<svg width="12" height="12" style="position:absolute;left:1609px;top:502px" viewBox="0 0 12 12"><path d="M1 1L11 11M11 1L1 11" stroke="#000" stroke-width="1"/></svg>
<div style="left:942px;top:524px;width:696px;height:130px;background:#fff;border-top:1px solid #828790;border-left:1px solid #828790;border-bottom:1px solid #828790;border-right:1px solid #828790"></div>
<div style="left:983px;top:525px;width:1px;height:22px;background:#e5e5e5"></div>
<div style="left:1041px;top:525px;width:1px;height:22px;background:#e5e5e5"></div>
<div style="left:1082px;top:525px;width:1px;height:22px;background:#e5e5e5"></div>
<div class="dl" style="left:947px;top:530px;letter-spacing:-0.15px">Xref</div>
<div class="dl" style="left:988px;top:530px;letter-spacing:-0.15px">Line</div>
<div class="dl" style="left:1046px;top:530px;letter-spacing:-0.15px">Colum</div>
<div class="dl" style="left:1087px;top:530px;letter-spacing:-0.15px">Pseudocode line</div>
<div style="left:1078px;top:527px;width:4px;height:18px;background:#fff"></div>
<div class="dl" style="left:945px;top:549px;color:#000">w</div>
<div class="dl" style="left:987px;top:549px;color:#000">41</div>
<div class="dl" style="left:1045px;top:549px;color:#000">13</div>
<div class="dl" style="left:1092px;top:549px;color:#000;letter-spacing:-0.3px">*(_QWORD *)pbInput = a5;</div>
<div class="dl" style="left:945px;top:564px;color:#000">r</div>
<div class="dl" style="left:987px;top:564px;color:#000">59</div>
<div class="dl" style="left:1045px;top:564px;color:#000">19</div>
<div class="dl" style="left:1092px;top:564px;color:#000;letter-spacing:-0.32px">if ( !*(_QWORD *)pbInput )</div>
<div class="dl" style="left:945px;top:579px;color:#000">r</div>
<div class="dl" style="left:987px;top:579px;color:#000">93</div>
<div class="dl" style="left:1045px;top:579px;color:#000">33</div>
<div class="dl" style="left:1092px;top:579px;color:#000;letter-spacing:-0.54px">v14 = sub_180079D38(*(_QWORD *)pbInput, &amp;cbInput, 0x7FFFFFFFLL);</div>
<div style="left:943px;top:593px;width:694px;height:15px;background:#0078d7"></div>
<div style="left:943px;top:593px;width:40px;height:15px;border:1px dotted #f0a040"></div>
<div class="dl" style="left:945px;top:594px;color:#fff">r</div>
<div class="dl" style="left:987px;top:594px;color:#fff">101</div>
<div class="dl" style="left:1045px;top:594px;color:#fff">31</div>
<div class="dl" style="left:1092px;top:594px;color:#fff;letter-spacing:-0.33px">v13 = BCryptHashData(phHash, pbInput, cbInput, 0);</div>
<div class="dl" style="left:948px;top:658px;letter-spacing:-0.2px">Line 4 of 4</div>
<div class="btn" style="left:1132px;border:2px solid #0078d7;line-height:19px">OK</div>
<div class="btn" style="left:1213px">Cancel</div>
<div class="btn" style="left:1294px">Search</div>
<div class="btn" style="left:1375px">Help</div>
</body></html>
